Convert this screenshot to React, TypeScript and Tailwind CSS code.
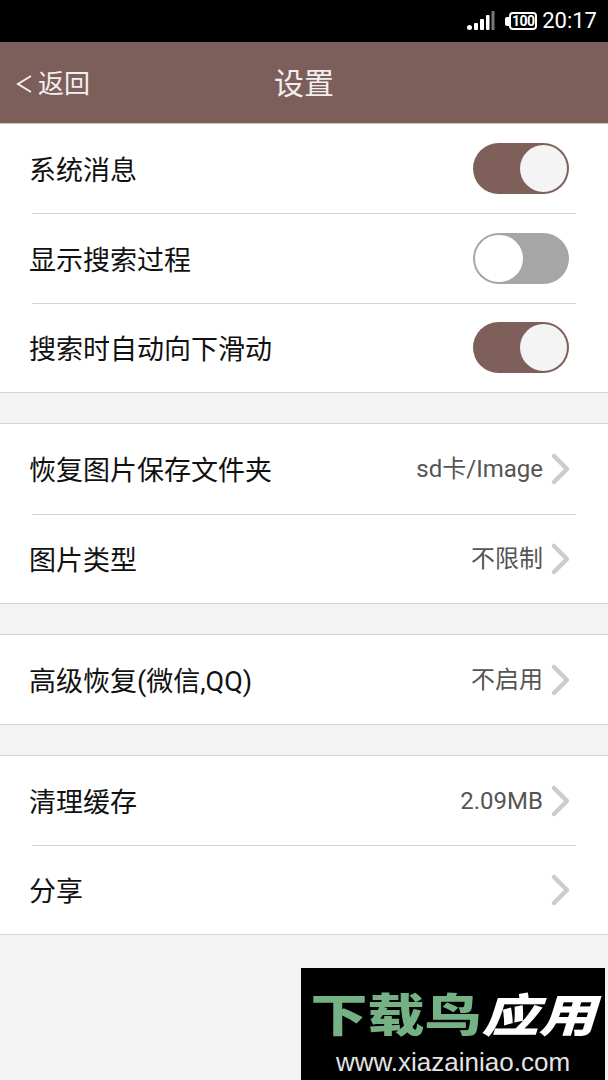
const cjk = "font-['Roboto','Noto_Sans_CJK_SC',sans-serif]";

function Toggle({ on, lift }: { on: boolean; lift?: boolean }) {
  return on ? (
    <div className={`w-[96px] h-[51px] rounded-full bg-[#7f5f5a] flex items-center justify-end pr-[2px] ${lift ? "mb-[1px]" : ""}`}>
      <div className="w-[47px] h-[47px] rounded-full bg-[#f4f4f4]" />
    </div>
  ) : (
    <div className="w-[96px] h-[51px] rounded-full bg-[#a6a6a6] flex items-center pl-[2px]">
      <div className="w-[48px] h-[47px] rounded-full bg-white" />
    </div>
  );
}

function Chevron() {
  return (
    <svg width="20" height="32" viewBox="0 0 20 32" className="ml-[6px] shrink-0">
      <path d="M5 3 L18 16 L5 29" fill="none" stroke="#cccccc" strokeWidth="4.5" strokeLinecap="round" strokeLinejoin="round" />
    </svg>
  );
}

function Row({ label, value, toggle, lift, arrow, divider, h = "h-[90px]" }: { label: string; value?: string; toggle?: boolean; lift?: boolean; arrow?: boolean; divider?: boolean; h?: string }) {
  return (
    <>
      <div className={`${h} flex items-center pl-[29px] pr-[39px]`}>
        <span className="flex-1 mt-[5px] text-[27px] leading-none text-[#111111]">{label}</span>
        {value && <span className="text-[24px] leading-none text-[#555555]">{value}</span>}
        {arrow && <Chevron />}
        {toggle !== undefined && <Toggle on={toggle} lift={lift} />}
      </div>
      {divider && <div className="h-px ml-[32px] mr-[32px] bg-[#d4d4d4]" />}
    </>
  );
}

function Group({ children, className = "" }: { children: React.ReactNode; className?: string }) {
  return <div className={`bg-white border-y border-[#d4d4d4] ${className}`}>{children}</div>;
}

export default function App() {
  return (
    <div className={`relative w-[608px] h-[1080px] overflow-hidden bg-[#f3f3f3] ${cjk}`}>
      <div className="h-[42px] bg-black flex items-center justify-end pr-[11px] gap-[5px] text-white">
        <svg width="28" height="22" viewBox="0 0 28 22" className="mr-[5px]">
          <circle cx="2.5" cy="17.5" r="2.5" fill="#fff" />
          <rect x="7" y="13" width="4" height="7" rx="1" fill="#fff" />
          <rect x="13" y="9" width="4" height="11" rx="1" fill="#fff" />
          <rect x="19" y="5" width="3.5" height="15" rx="1" fill="#fff" />
          <rect x="24.5" y="1" width="3" height="19" fill="#777" />
        </svg>
        <div className="flex items-center">
          <div className="w-[4px] h-[9px] bg-white rounded-l-[2px]" />
          <div className="w-[28px] h-[18px] border-2 border-white rounded-[4px] flex items-center justify-center text-[14px] font-bold leading-none tracking-[-0.5px]">100</div>
        </div>
        <span className="text-[22px] leading-none font-normal">20:17</span>
      </div>

      <div className="relative h-[82px] bg-[#7c5e5a] border-b border-[#cfc8c6] flex items-center justify-center text-[#f3efee]">
        <div className="absolute left-[15px] top-[2px] bottom-0 flex items-center gap-[5px]">
          <svg width="18" height="22" viewBox="0 0 18 22">
            <path d="M16 3 L3 11 L16 19" fill="none" stroke="#f3efee" strokeWidth="2" />
          </svg>
          <span className="text-[26px] leading-none">返回</span>
        </div>
        <span className="mt-[3px] text-[30px] leading-none">设置</span>
      </div>

      <div className="bg-white border-b border-[#d4d4d4]">
        <Row label="系统消息" toggle={true} divider h="h-[89px]" />
        <Row label="显示搜索过程" toggle={false} divider h="h-[89px]" />
        <Row label="搜索时自动向下滑动" toggle={true} lift h="h-[88px]" />
      </div>

      <Group className="mt-[30px]">
        <Row label="恢复图片保存文件夹" value="sd卡/Image" arrow divider />
        <Row label="图片类型" value="不限制" arrow h="h-[88px]" />
      </Group>

      <Group className="mt-[30px]">
        <Row label="高级恢复(微信,QQ)" value="不启用" arrow h="h-[89px]" />
      </Group>

      <Group className="mt-[30px]">
        <Row label="清理缓存" value="2.09MB" arrow divider h="h-[89px]" />
        <Row label="分享" arrow h="h-[88px]" />
      </Group>

      <div className="absolute left-[301px] top-[968px] w-[304px] h-[112px] bg-black flex flex-col items-center">
        <div className="mt-[26px] h-[44px] flex items-center text-[57px] leading-none font-black tracking-[0px] scale-y-[0.8]">
          <span className="text-[#74b285]">下载鸟</span>
          <span className="text-white italic">应用</span>
        </div>
        <div className="mt-[11px] text-[26px] leading-none text-[#e4e4e4] font-['Liberation_Sans',sans-serif]">www.xiazainiao.com</div>
      </div>
    </div>
  );
}
